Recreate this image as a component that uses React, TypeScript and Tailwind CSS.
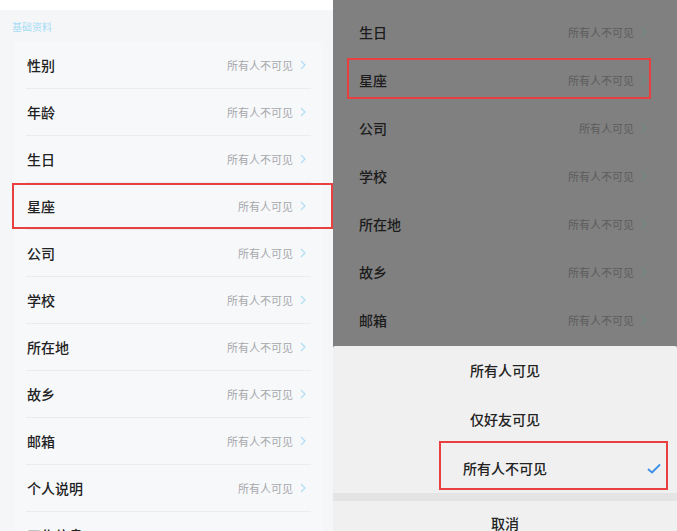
import { Fragment } from 'react'

const font = { fontFamily: '"Noto Sans CJK SC", "Noto Sans", sans-serif' }

const leftRows = [
  ['性别', '所有人不可见'],
  ['年龄', '所有人不可见'],
  ['生日', '所有人不可见'],
  ['星座', '所有人可见'],
  ['公司', '所有人可见'],
  ['学校', '所有人不可见'],
  ['所在地', '所有人不可见'],
  ['故乡', '所有人不可见'],
  ['邮箱', '所有人不可见'],
  ['个人说明', '所有人可见'],
  ['工作信息', ''],
]

const rightRows = [
  ['生日', '所有人不可见'],
  ['星座', '所有人不可见'],
  ['公司', '所有人可见'],
  ['学校', '所有人不可见'],
  ['所在地', '所有人不可见'],
  ['故乡', '所有人不可见'],
  ['邮箱', '所有人不可见'],
]

function Chevron({ color }: { color: string }) {
  return (
    <svg width="6" height="10" viewBox="0 0 6 10" className="ml-[7px]">
      <polyline points="1,1 5,5 1,9" fill="none" stroke={color} strokeWidth="1.3" />
    </svg>
  )
}

function Check() {
  return (
    <svg width="14" height="11" viewBox="0 0 14 11">
      <polyline points="1.5,6 5,9 12.5,1.5" fill="none" stroke="#3b8fe8" strokeWidth="1.8" strokeLinecap="round" strokeLinejoin="round" />
    </svg>
  )
}

function LeftPanel() {
  return (
    <div className="w-[333px] h-full flex flex-col bg-[#f5f6f8] overflow-hidden">
      <div className="h-[10px] bg-white shrink-0" />
      <div className="h-[32px] shrink-0 flex items-center pl-[12px] text-[10px] text-[#a6dcf6]">基础资料</div>
      <div className="mx-[14px] mr-[10px] bg-[#f7f8fa] flex flex-col">
        {leftRows.map(([label, value], i) => (
          <Fragment key={label}>
            {i > 0 && <div className="mx-[12px] h-px bg-[#ececee]" />}
            <div className="relative h-[46px] flex items-center pl-[13px] pr-[17px]">
              <span className="text-[14px] font-medium text-[#222]">{label}</span>
              <div className="flex-1" />
              {value && (
                <>
                  <span className="text-[11px] text-[#a6a8ac]">{value}</span>
                  <Chevron color="#b3e0f5" />
                </>
              )}
              {label === '星座' && (
                <div className="absolute left-[-2px] right-[-10px] top-0 bottom-0 border-2 border-[#e8403f]" />
              )}
            </div>
          </Fragment>
        ))}
      </div>
    </div>
  )
}

function RightPanel() {
  return (
    <div className="w-[344px] h-full flex flex-col bg-[#808080] overflow-hidden">
      <div className="h-[8px] shrink-0" />
      {rightRows.map(([label, value]) => (
        <div key={label} className="relative h-[48px] shrink-0 flex items-center pl-[26px] pr-[30px]">
          <span className="text-[14px] font-medium text-[#1c1c1c]">{label}</span>
          <div className="flex-1" />
          <span className="text-[11px] text-[#5c5c5c]">{value}</span>
          <Chevron color="#6f8a86" />
          {label === '星座' && (
            <div className="absolute left-[14px] right-[26px] top-[2px] bottom-[5px] border-2 border-[#e8403f]" />
          )}
        </div>
      ))}
      <div className="h-[2px] shrink-0" />
      <div className="flex-1 bg-[#f0f0f0] flex flex-col rounded-t-[2px]">
        {['所有人可见', '仅好友可见', '所有人不可见'].map((opt) => (
          <div key={opt} className="relative h-[49px] shrink-0 flex items-center justify-center">
            <span className="text-[14px] font-medium text-[#222]">{opt}</span>
            {opt === '所有人不可见' && (
              <>
                <div className="absolute right-[16px] top-1/2 -translate-y-1/2">
                  <Check />
                </div>
                <div className="absolute left-[106px] right-[9px] top-[-3px] bottom-[3px] border-2 border-[#e8403f]" />
              </>
            )}
          </div>
        ))}
        <div className="h-[8px] shrink-0 bg-[#e4e4e4]" />
        <div className="h-[44px] shrink-0 flex items-center justify-center">
          <span className="text-[14px] font-medium text-[#222]">取消</span>
        </div>
      </div>
    </div>
  )
}

export default function App() {
  return (
    <div className="w-[677px] h-[531px] flex overflow-hidden bg-white" style={font}>
      <LeftPanel />
      <RightPanel />
    </div>
  )
}
